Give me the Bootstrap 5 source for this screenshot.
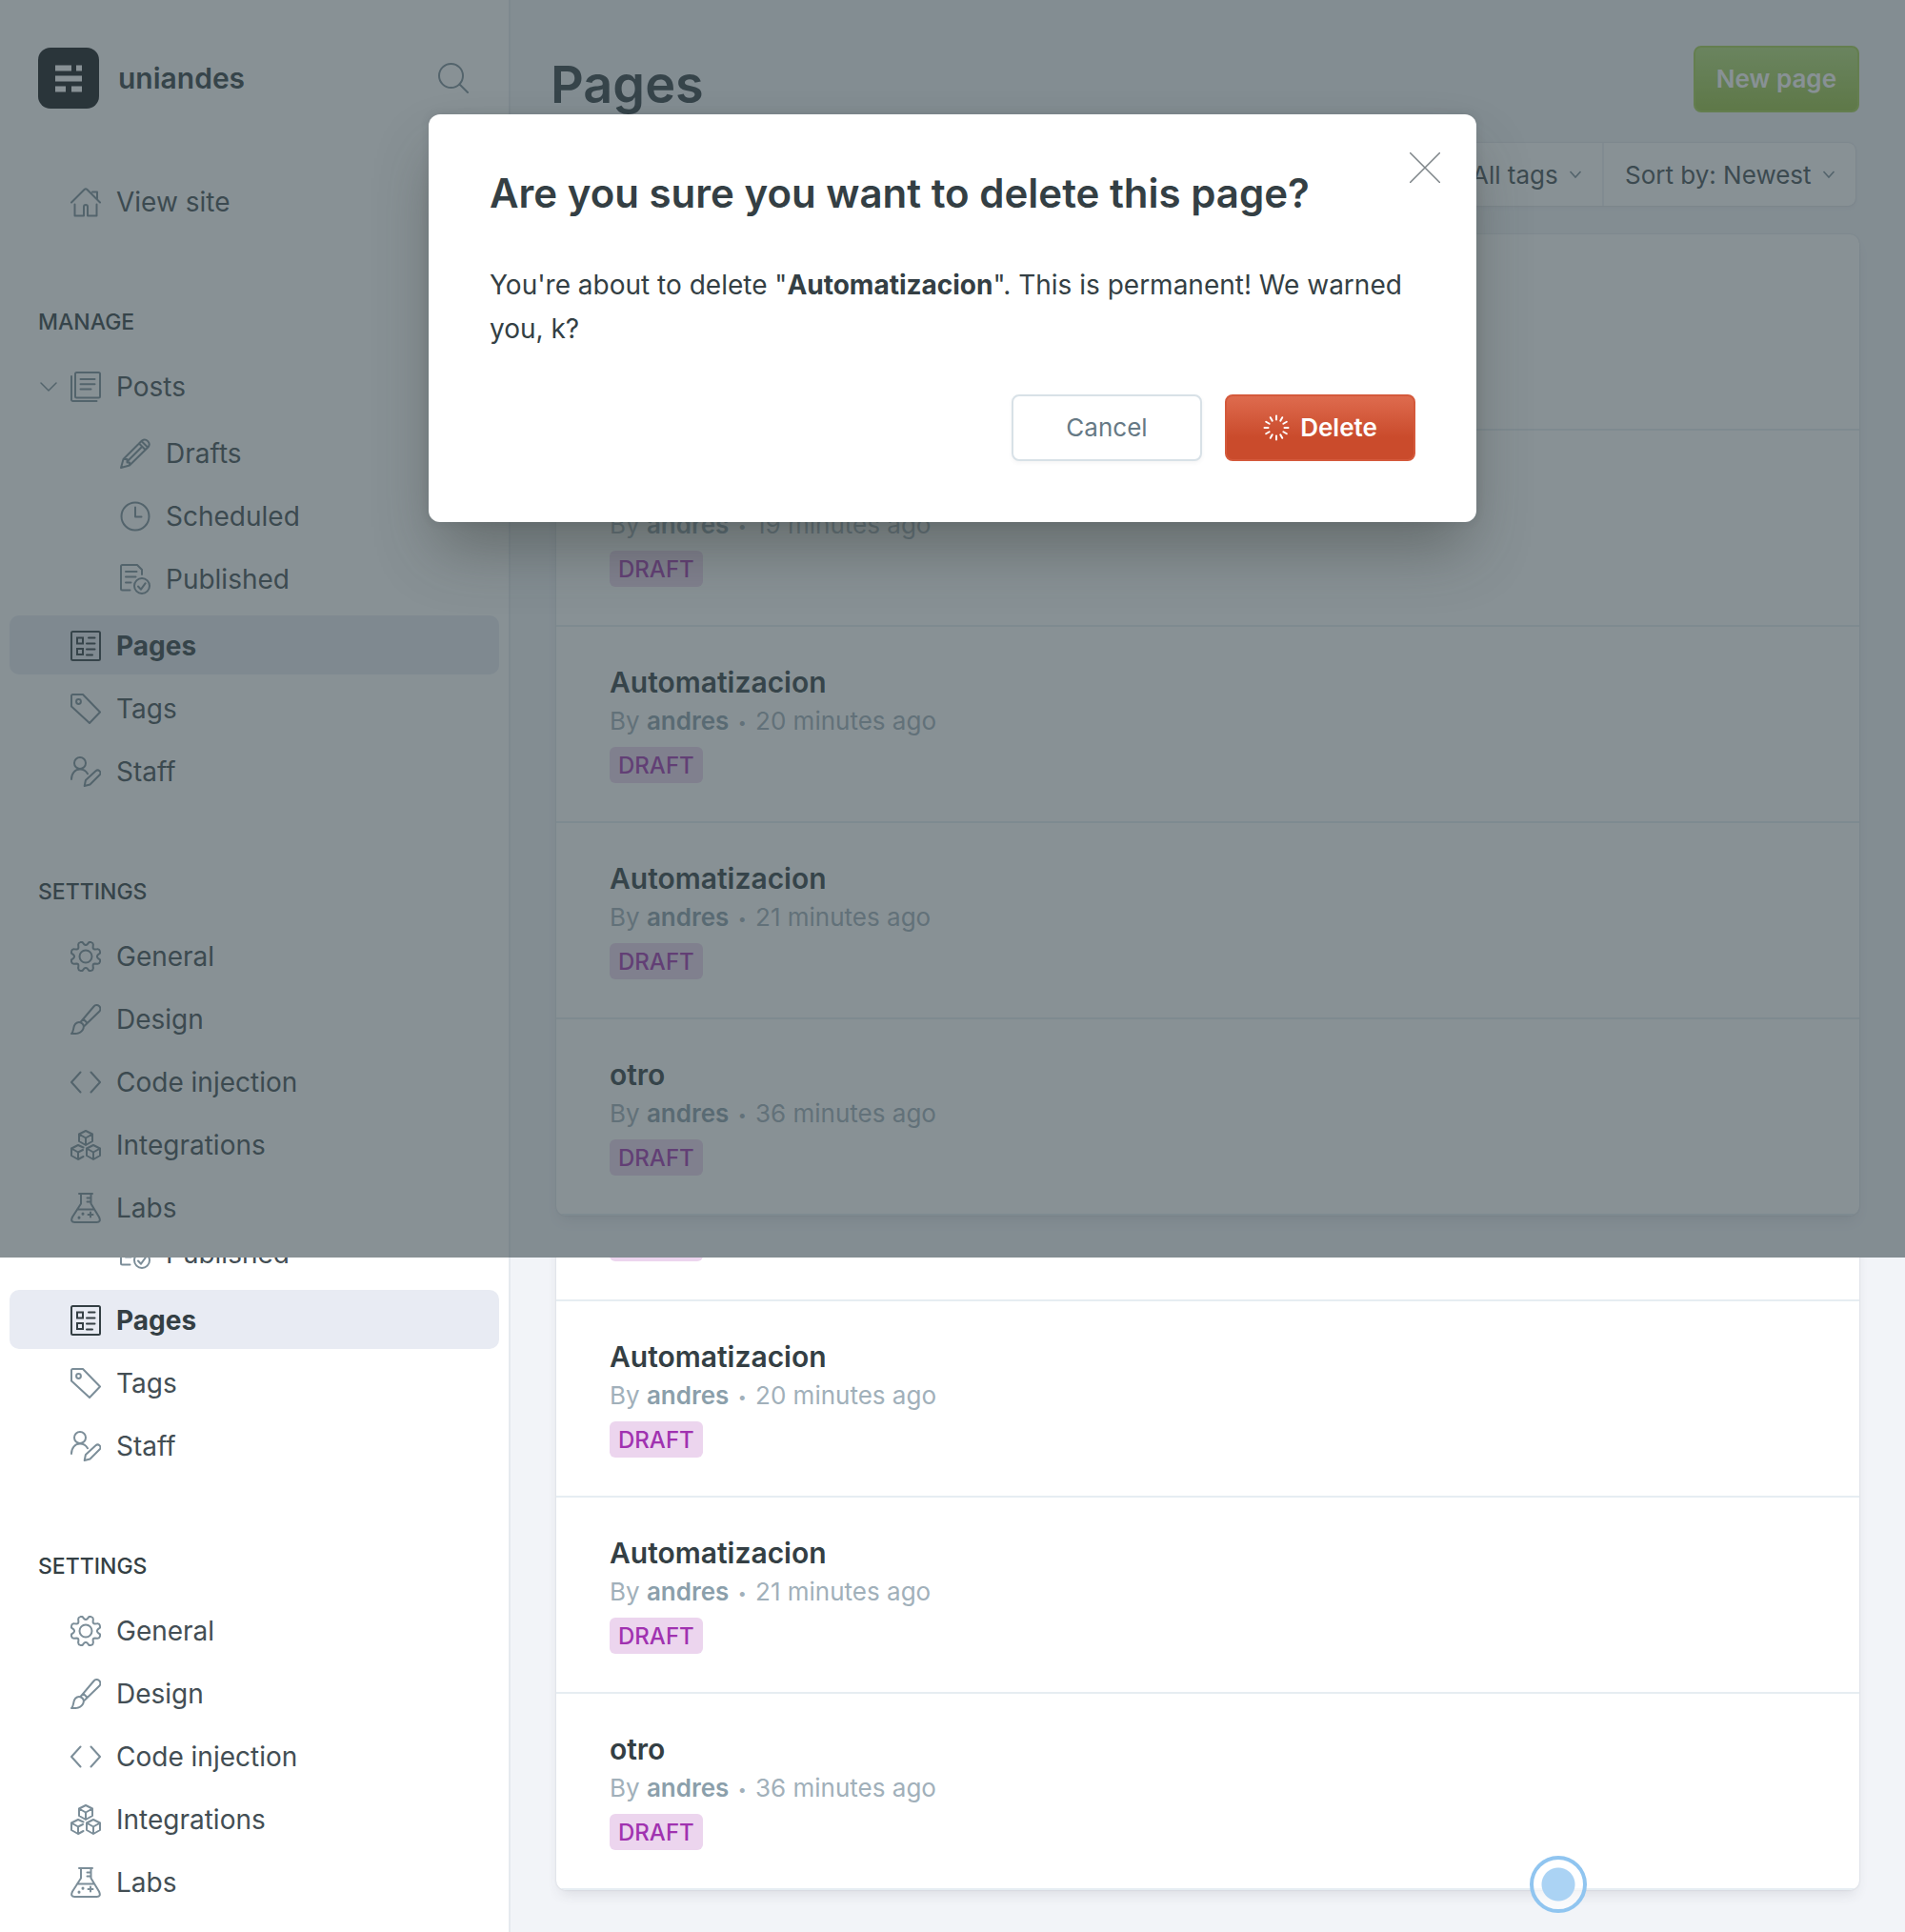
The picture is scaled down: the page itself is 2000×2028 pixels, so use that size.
<!DOCTYPE html>
<html lang="en">
<head>
<meta charset="utf-8">
<meta name="viewport" content="width=device-width, initial-scale=1">
<title>Pages - uniandes</title>
<link href="https://cdn.jsdelivr.net/npm/bootstrap@5.3.0/dist/css/bootstrap.min.css" rel="stylesheet">
<style>
  body { font-family: Inter, "Liberation Sans", sans-serif; font-size: 28px; line-height: 36px; color: #343f44; background: #f2f4f8; height: 100vh; min-height: 1400px; }
  svg { flex: none; }
  .icon { width: 32px; height: 32px; fill: none; stroke: #7c8e99; stroke-width: 2; stroke-linecap: round; stroke-linejoin: round; }
  .icon-caret { width: 18px; height: 18px; }
  .screen { overflow: hidden; }
  .screen-rest { flex: 1 1 0; min-height: 0; }

  .side { width: 536px; flex: none; background: #fff; border-right: 2px solid #e5eaef; padding: 0 10px 22px 10px; }
  .brand { padding: 50px 32px 66px 30px; gap: 20px; font-size: 30px; font-weight: 600; }
  .side-link { height: 62px; flex: none; padding: 2px 16px 0 64px; gap: 16px; margin-bottom: 4px; border-radius: 10px; color: #434e54; text-decoration: none; }
  .side-link.with-caret { padding-left: 32px; gap: 14px; }
  .side-link.with-caret .icon + span { margin-left: 2px; }
  .side-link.active { background: #e8ebf3; color: #343f44; font-weight: 700; }
  .side-link.active .icon { stroke: #343f44; }
  .side-sub { margin: 8px 0; }
  .side-sub .side-link { padding-left: 116px; }
  .side-last { margin-bottom: 0; }
  .side-heading { flex: none; font-size: 23px; line-height: 28px; font-weight: 500; margin: 0 0 22px 30px; padding-top: 78px; }
  .icon-btn { background: none; border: 0; padding: 0; line-height: 1; }
  .icon-btn svg { display: block; }

  .content { min-width: 0; padding: 0 48px 44px 48px; }
  .content-head { padding-top: 48px; margin-bottom: 32px; }
  .page-title { font-size: 54px; line-height: 82px; height: 70px; font-weight: 600; margin: 0 -6px; }
  .btn-wide { height: 70px; border-radius: 8px; font-size: 26px; line-height: 36px; padding: 0 22px; }
  .btn-new { color: #fff; font-weight: 600; border: 2px solid #a6d052; background: linear-gradient(#b4de78, #97c140); }
  .filters { height: 66px; margin: 0 4px 30px 0; background: #fff; border-radius: 8px; box-shadow: 0 0 2px rgba(60,70,90,.2), 0 2px 4px rgba(60,70,90,.06); overflow: hidden; }
  .filters .form-select { width: auto; border: 0; border-radius: 0; font-size: 26px; color: #434e54; background-color: transparent; padding: 0 46px 0 22px; background-position: right 21px center; background-size: 14px 14px; --bs-form-select-bg-img: url("data:image/svg+xml,%3csvg xmlns='http://www.w3.org/2000/svg' viewBox='0 0 14 14'%3e%3cpath fill='none' stroke='%237c8e99' stroke-width='1.6' d='M1.5 4l5.500 6 5.500-6'/%3e%3c/svg%3e"); }
  .filters .form-select + .form-select { border-left: 2px solid #eef1f5; }

  .posts { background: #fff; border-radius: 10px; box-shadow: 0 0 2px rgba(60,70,90,.18), 0 8px 14px -4px rgba(60,60,70,.12); overflow: hidden; }
  .post { height: 206px; padding: 38px 56px 0 56px; border-bottom: 2px solid #e6edf2; }
  .post-title { font-size: 30px; line-height: 40px; font-weight: 600; margin: 0; }
  .post-title a { color: inherit; text-decoration: none; }
  .post-meta { font-size: 26px; line-height: 42px; margin: 0 0 6px; color: #a1b0ba; }
  .post-meta b { font-weight: 600; color: #8b9fab; }
  .post-meta i { font-style: normal; font-size: 16px; line-height: 1; vertical-align: 2px; margin: 0 2px; }
  .tag-draft { display: inline-block; vertical-align: top; height: 38px; line-height: 40px; padding: 0 9px; border-radius: 6px; font-size: 24px; font-weight: 500; background: #ecd5ee; color: #a032b0; }

  .veil { background: rgba(57,71,79,.6); }
  .dialog-slot { top: 120px; }
  .dialog-box { width: 1100px; max-width: 100%; background: #fff; border-radius: 12px; padding: 58px 64px 64px; box-shadow: 0 0 10px rgba(40,50,55,.14), 0 36px 64px -10px rgba(50,55,50,.42); }
  .dialog-title { font-size: 42px; line-height: 50px; font-weight: 600; margin: 0 0 48px; }
  .dialog-text { line-height: 46px; margin: 0 0 46px; }
  .dialog-text b { font-weight: 700; }
  .dialog-close { top: 40px; right: 38px; }
  .btn-pair { min-width: 200px; }
  .btn-cancel { border: 2px solid #d8e1e7; color: #667985; background: #fff; box-shadow: 0 2px 4px rgba(60,70,90,.06); }
  .btn-remove { border: 2px solid #d4593b; color: #fff; font-weight: 600; background: linear-gradient(#de6b4e, #ca4b2c 65%); gap: 11px; }

  .pointer { width: 60px; height: 60px; right: 334px; bottom: 20px; border-radius: 50%; border: 4px solid #90c5f0; background: radial-gradient(circle, #abd3f4 17px, rgba(255,255,255,.6) 18px); }
</style>
</head>
<body class="d-flex flex-column">

<svg class="d-none" aria-hidden="true">
  <symbol id="i-home" viewBox="0 0 32 32"><path d="M1 16.500 14.500 3q1.500-1.400 3 0L31 16.500M23 5.500h5v7M4.500 18.500V30.500h9.500V21a2 2 0 0 1 4 0v9.500h9.500v-12"/></symbol>
  <symbol id="i-posts" viewBox="0 0 32 32"><rect x="5" y="1" width="26" height="26.500" rx="1.500"/><path d="M1 5v24.500a1.500 1.500 0 0 0 1.500 1.500H27.500M10.500 8h15M10.500 13.200h15M10.500 18.400h11"/></symbol>
  <symbol id="i-caret" viewBox="0 0 18 18"><path stroke-width="1.500" d="M1 5l8 8 8-8"/></symbol>
  <symbol id="i-pencil" viewBox="0 0 32 32"><path d="M1 31l2.500-9L23 2.500a4.800 4.800 0 0 1 6.600 6.800L10 28.500zM20 5.500l6.500 6.500M22.500 3l6.500 6.500M8 24 23 9M3.500 22h4v3.500H10v3"/></symbol>
  <symbol id="i-clock" viewBox="0 0 32 32"><circle cx="16" cy="16" r="14.500"/><path d="M16 6.500V16.500h6.500"/></symbol>
  <symbol id="i-published" viewBox="0 0 32 32"><path d="M10.500 27.500H2.500A1.500 1.500 0 0 1 1 26V2.500A1.500 1.500 0 0 1 2.500 1H18l5 5v5M6 8h11.500M6 13.500h10.500M6 19.500h5.500"/><circle cx="23" cy="23" r="8"/><path d="M19 23.500l3 3.200 4.700-6.500"/></symbol>
  <symbol id="i-pages" viewBox="0 0 32 32"><rect x="1" y="1" width="30" height="30" rx="1.500"/><path stroke-linejoin="miter" d="M7 7.500h6v6H7zM7 19h6v6H7zM19 7.500h6.500M17 13.500h8.500M17 19.500h8.500M17 25.500h6"/></symbol>
  <symbol id="i-tag" viewBox="0 0 32 32"><path d="M1 2.500A1.500 1.500 0 0 1 2.500 1H13L31 19.500 20 31 1 13.500z"/><circle cx="8.500" cy="8.500" r="2.400"/></symbol>
  <symbol id="i-staff" viewBox="0 0 32 32"><circle cx="10" cy="7" r="6"/><path d="M1 24c0-6.500 4-10.500 9-10.500 3.500 0 6.300 1.800 8 4.700M14.700 31l1.200-6L26.500 15.300a2.900 2.900 0 0 1 4 4.200L20.500 29.500z"/></symbol>
  <symbol id="i-gear" viewBox="0 0 32 32">
    <g transform="translate(16 16)"><circle r="6.500"/>
      <g id="gear-arc"><path d="M0-12C1.500-12 2-12.700 2.500-13.700 3-15 4-15.500 5.700-14.900 7.500-14.400 8-13.300 7.800-12L7.600-9.500Q7.600-7.700 9.500-7.600L12-7.800C13.300-8 14.400-7.500 14.900-5.700 15.500-4 15-3 13.700-2.500 12.700-2 12-1.500 12 0"/></g>
      <use href="#gear-arc" transform="rotate(90)"/><use href="#gear-arc" transform="rotate(180)"/><use href="#gear-arc" transform="rotate(270)"/></g></symbol>
  <symbol id="i-brush" viewBox="0 0 32 32"><path d="M10.500 19 24.500 2.500a3.900 3.900 0 0 1 6 5L14.500 23M13.500 15.800l4 4M1 31c2.200-1.500 1.700-5 3-8.300 1.200-3 4.300-4.400 7-3.200 3 1.400 3.500 4.500 2 7.200C11 30.200 6.500 31.500 1 31z"/></symbol>
  <symbol id="i-code" viewBox="0 0 32 32"><path d="M10.500 5.500 1 16l9.500 10.500M21.500 5.500 31 16l-9.500 10.500"/></symbol>
  <symbol id="i-cubes" viewBox="0 0 32 32"><path d="M16 1l7 3.500v7.500l-7 4-7-4V4.500zM9 4.500l7 4 7-4M16 8.500V16M13.500 18.500 8 16l-7 3.500V27l7 4 5.500-3M1 19.500l7 4 5-2.500M8 23.500V31M24 16l7 3.500V27l-7 4-7-4v-7.500zM17 19.500l7 4 7-4M24 23.500V31"/></symbol>
  <symbol id="i-flask" viewBox="0 0 32 32"><path d="M9 1h14M11 1v10.500L2 25.500Q-.5 31 4.500 31h23q5 0 2.500-5.500L21.500 11.500V1M7 17.500h18M17.500 5.500h3.500M17.500 9.500h3.500M21 20.500v5M18.500 23h5"/><path d="M9 26v.2M13 22v.2" stroke-width="3"/></symbol>
  <symbol id="i-search" viewBox="0 0 32 32"><circle cx="13.500" cy="13.500" r="12.500"/><path d="M22.500 22.500 31 31"/></symbol>
</svg>

<section class="screen position-relative d-flex flex-shrink-0">
  <nav class="side" aria-label="Main">
    <div class="brand d-flex align-items-center">
      <svg width="64" height="64" viewBox="0 0 64 64" role="img" aria-label="Ghost"><rect width="64" height="64" rx="13" fill="#15191d"/><path fill="#fff" d="M18 18.500h17v6H18zM40 18.500h6v6h-6zM18 29.500h28v6H18zM18 40.500h11v6H18zM35 40.500h11v6H35z"/></svg>
      <span class="flex-grow-1">uniandes</span>
      <button class="icon-btn" type="button" aria-label="Search"><svg class="icon"><use href="#i-search"/></svg></button>
    </div>
    <a class="side-link d-flex align-items-center" href="#"><svg class="icon"><use href="#i-home"/></svg><span>View site</span></a>
    <h2 class="side-heading">MANAGE</h2>
    <a class="side-link with-caret d-flex align-items-center" href="#"><svg class="icon icon-caret"><use href="#i-caret"/></svg><svg class="icon"><use href="#i-posts"/></svg><span>Posts</span></a>
    <div class="side-sub">
      <a class="side-link d-flex align-items-center" href="#"><svg class="icon"><use href="#i-pencil"/></svg><span>Drafts</span></a>
      <a class="side-link d-flex align-items-center" href="#"><svg class="icon"><use href="#i-clock"/></svg><span>Scheduled</span></a>
      <a class="side-link side-last d-flex align-items-center" href="#"><svg class="icon"><use href="#i-published"/></svg><span>Published</span></a>
    </div>
    <a class="side-link active d-flex align-items-center" href="#"><svg class="icon"><use href="#i-pages"/></svg><span>Pages</span></a>
    <a class="side-link d-flex align-items-center" href="#"><svg class="icon"><use href="#i-tag"/></svg><span>Tags</span></a>
    <a class="side-link d-flex align-items-center" href="#"><svg class="icon"><use href="#i-staff"/></svg><span>Staff</span></a>
    <h2 class="side-heading">SETTINGS</h2>
    <a class="side-link d-flex align-items-center" href="#"><svg class="icon"><use href="#i-gear"/></svg><span>General</span></a>
    <a class="side-link d-flex align-items-center" href="#"><svg class="icon"><use href="#i-brush"/></svg><span>Design</span></a>
    <a class="side-link d-flex align-items-center" href="#"><svg class="icon"><use href="#i-code"/></svg><span>Code injection</span></a>
    <a class="side-link d-flex align-items-center" href="#"><svg class="icon"><use href="#i-cubes"/></svg><span>Integrations</span></a>
    <a class="side-link side-last d-flex align-items-center" href="#"><svg class="icon"><use href="#i-flask"/></svg><span>Labs</span></a>
  </nav>

  <main class="content flex-grow-1">
    <header class="content-head d-flex justify-content-between">
      <h1 class="page-title">Pages</h1>
      <button class="btn btn-wide btn-new" type="button">New page</button>
    </header>
    <div class="d-flex justify-content-end">
      <div class="filters d-flex">
        <select class="form-select" aria-label="Tag"><option>All tags</option></select>
        <select class="form-select" aria-label="Order"><option>Sort by: Newest</option></select>
      </div>
    </div>
    <ul class="posts list-unstyled mb-0">
      <li class="post"></li>
      <li class="post"><h3 class="post-title"><a href="#">Automatizacion</a></h3><p class="post-meta">By <b>andres</b> <i>•</i> 19 minutes ago</p><span class="tag-draft">DRAFT</span></li>
      <li class="post"><h3 class="post-title"><a href="#">Automatizacion</a></h3><p class="post-meta">By <b>andres</b> <i>•</i> 20 minutes ago</p><span class="tag-draft">DRAFT</span></li>
      <li class="post"><h3 class="post-title"><a href="#">Automatizacion</a></h3><p class="post-meta">By <b>andres</b> <i>•</i> 21 minutes ago</p><span class="tag-draft">DRAFT</span></li>
      <li class="post"><h3 class="post-title"><a href="#">otro</a></h3><p class="post-meta">By <b>andres</b> <i>•</i> 36 minutes ago</p><span class="tag-draft">DRAFT</span></li>
    </ul>
  </main>

  <div class="veil position-absolute top-0 start-0 w-100 h-100"></div>
  <div class="dialog-slot position-absolute start-0 w-100 d-flex justify-content-center">
    <div class="dialog-box position-relative" role="dialog" aria-labelledby="dialog-title">
      <button class="icon-btn dialog-close position-absolute" type="button" aria-label="Close"><svg width="32" height="32" viewBox="0 0 32 32" fill="none" stroke="#7d8488" stroke-width="1.500"><path d="M0 0l32 32M32 0 0 32"/></svg></button>
      <h2 class="dialog-title" id="dialog-title">Are you sure you want to delete this page?</h2>
      <p class="dialog-text">You're about to delete "<b>Automatizacion</b>". This is permanent! We warned you, k?</p>
      <div class="d-flex justify-content-end gap-4">
        <button class="btn btn-wide btn-pair btn-cancel" type="button">Cancel</button>
        <button class="btn btn-wide btn-pair btn-remove d-flex align-items-center justify-content-center" type="button">
          <svg width="28" height="28" viewBox="-14 -14 28 28" stroke="#fff" stroke-width="2" stroke-linecap="round" aria-hidden="true">
            <path id="spoke" d="M0-12.500V-8.500M0 8.500v4"/>
            <use href="#spoke" transform="rotate(30)"/><use href="#spoke" transform="rotate(60)"/><use href="#spoke" transform="rotate(90)"/><use href="#spoke" transform="rotate(120)"/><use href="#spoke" transform="rotate(150)"/>
          </svg>
          <span>Delete</span>
        </button>
      </div>
    </div>
  </div>
</section>

<section class="screen screen-rest position-relative d-flex">
  <nav class="side d-flex flex-column justify-content-end" aria-label="Main, continued">
    <div class="side-sub">
      <a class="side-link side-last d-flex align-items-center" href="#"><svg class="icon"><use href="#i-published"/></svg><span>Published</span></a>
    </div>
    <a class="side-link active d-flex align-items-center" href="#"><svg class="icon"><use href="#i-pages"/></svg><span>Pages</span></a>
    <a class="side-link d-flex align-items-center" href="#"><svg class="icon"><use href="#i-tag"/></svg><span>Tags</span></a>
    <a class="side-link d-flex align-items-center" href="#"><svg class="icon"><use href="#i-staff"/></svg><span>Staff</span></a>
    <h2 class="side-heading">SETTINGS</h2>
    <a class="side-link d-flex align-items-center" href="#"><svg class="icon"><use href="#i-gear"/></svg><span>General</span></a>
    <a class="side-link d-flex align-items-center" href="#"><svg class="icon"><use href="#i-brush"/></svg><span>Design</span></a>
    <a class="side-link d-flex align-items-center" href="#"><svg class="icon"><use href="#i-code"/></svg><span>Code injection</span></a>
    <a class="side-link d-flex align-items-center" href="#"><svg class="icon"><use href="#i-cubes"/></svg><span>Integrations</span></a>
    <a class="side-link side-last d-flex align-items-center" href="#"><svg class="icon"><use href="#i-flask"/></svg><span>Labs</span></a>
  </nav>
  <div class="content flex-grow-1 d-flex flex-column justify-content-end">
    <ul class="posts list-unstyled mb-0 flex-shrink-0">
      <li class="post"><h3 class="post-title"><a href="#">Automatizacion</a></h3><p class="post-meta">By <b>andres</b> <i>•</i> 19 minutes ago</p><span class="tag-draft">DRAFT</span></li>
      <li class="post"><h3 class="post-title"><a href="#">Automatizacion</a></h3><p class="post-meta">By <b>andres</b> <i>•</i> 20 minutes ago</p><span class="tag-draft">DRAFT</span></li>
      <li class="post"><h3 class="post-title"><a href="#">Automatizacion</a></h3><p class="post-meta">By <b>andres</b> <i>•</i> 21 minutes ago</p><span class="tag-draft">DRAFT</span></li>
      <li class="post"><h3 class="post-title"><a href="#">otro</a></h3><p class="post-meta">By <b>andres</b> <i>•</i> 36 minutes ago</p><span class="tag-draft">DRAFT</span></li>
    </ul>
  </div>
  <div class="pointer position-absolute"></div>
</section>

<script src="https://cdn.jsdelivr.net/npm/bootstrap@5.3.0/dist/js/bootstrap.bundle.min.js"></script>
</body>
</html>
